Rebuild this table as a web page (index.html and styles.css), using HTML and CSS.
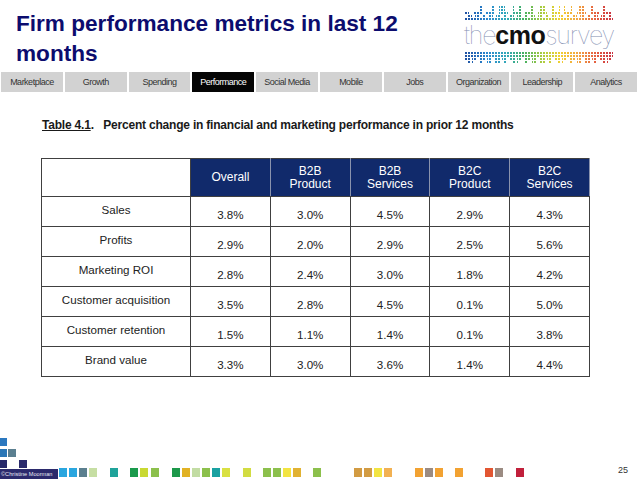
FILE: index.html
```html
<!DOCTYPE html>
<html lang="en">
<head>
<meta charset="utf-8">
<title>Firm performance metrics</title>
<link rel="stylesheet" href="styles.css">
</head>
<body>
<div class="slide">
  <header class="top">
    <h1 class="title">Firm performance metrics in last 12<br>months</h1>
    <div class="logo">
      <div class="dots dots-top"></div>
      <div class="logo-text"><span class="thin">the</span><span class="bold">cmo</span><span class="thin">survey</span></div>
      <div class="dots dots-bottom"></div>
    </div>
  </header>

  <nav class="tabs">
    <span class="tab">Marketplace</span>
    <span class="tab">Growth</span>
    <span class="tab">Spending</span>
    <span class="tab active">Performance</span>
    <span class="tab">Social Media</span>
    <span class="tab">Mobile</span>
    <span class="tab">Jobs</span>
    <span class="tab">Organization</span>
    <span class="tab">Leadership</span>
    <span class="tab">Analytics</span>
  </nav>

  <p class="caption"><span class="ul">Table 4.1</span>.&nbsp;&nbsp; Percent change in financial and marketing performance in prior 12 months</p>

  <table class="data">
    <thead>
      <tr>
        <th class="blank"></th>
        <th>Overall</th>
        <th>B2B<br>Product</th>
        <th>B2B<br>Services</th>
        <th>B2C<br>Product</th>
        <th>B2C<br>Services</th>
      </tr>
    </thead>
    <tbody>
      <tr><td class="label">Sales</td><td>3.8%</td><td>3.0%</td><td>4.5%</td><td>2.9%</td><td>4.3%</td></tr>
      <tr><td class="label">Profits</td><td>2.9%</td><td>2.0%</td><td>2.9%</td><td>2.5%</td><td>5.6%</td></tr>
      <tr><td class="label">Marketing ROI</td><td>2.8%</td><td>2.4%</td><td>3.0%</td><td>1.8%</td><td>4.2%</td></tr>
      <tr><td class="label">Customer acquisition</td><td>3.5%</td><td>2.8%</td><td>4.5%</td><td>0.1%</td><td>5.0%</td></tr>
      <tr><td class="label">Customer retention</td><td>1.5%</td><td>1.1%</td><td>1.4%</td><td>0.1%</td><td>3.8%</td></tr>
      <tr><td class="label">Brand value</td><td>3.3%</td><td>3.0%</td><td>3.6%</td><td>1.4%</td><td>4.4%</td></tr>
    </tbody>
  </table>

  <footer class="foot">
    <div class="foot-left">
      <svg class="stack" width="27" height="31" viewBox="0 0 27 31">
        <rect x="0" y="0" width="7" height="8" fill="#2b78bf"/>
        <rect x="0" y="11" width="7" height="8" fill="#2a76b6"/>
        <rect x="8" y="11" width="8" height="8" fill="#5b7f90"/>
        <rect x="0" y="22" width="7" height="8" fill="#26286a"/>
        <rect x="19" y="22" width="8" height="8" fill="#2a2a6c"/>
      </svg>
      <div class="copy">©Christine Moorman</div>
    </div>
    <svg class="strip" width="470" height="10" viewBox="0 0 470 10">
      <rect x="0" y="0" width="8" height="9" fill="#2aa6df"/>
      <rect x="10" y="0" width="8" height="9" fill="#2aa6df"/>
      <rect x="20" y="0" width="8" height="9" fill="#5b7f8f"/>
      <rect x="30" y="0" width="8" height="9" fill="#c6dea3"/>
      <rect x="51" y="0" width="8" height="9" fill="#1fa39a"/>
      <rect x="71" y="0" width="8" height="9" fill="#1a9a4c"/>
      <rect x="81" y="0" width="8" height="9" fill="#c9d932"/>
      <rect x="92" y="0" width="8" height="9" fill="#8cc04c"/>
      <rect x="113" y="0" width="8" height="9" fill="#1c984a"/>
      <rect x="123" y="0" width="8" height="9" fill="#e1b224"/>
      <rect x="133" y="0" width="8" height="9" fill="#c2dca3"/>
      <rect x="143" y="0" width="8" height="9" fill="#8cc04c"/>
      <rect x="153" y="0" width="8" height="9" fill="#1aa1a1"/>
      <rect x="163" y="0" width="8" height="9" fill="#d9e042"/>
      <rect x="184" y="0" width="8" height="9" fill="#d2dc42"/>
      <rect x="204" y="0" width="8" height="9" fill="#8cc04c"/>
      <rect x="214" y="0" width="8" height="9" fill="#8cc04c"/>
      <rect x="224" y="0" width="8" height="9" fill="#f2e442"/>
      <rect x="234" y="0" width="8" height="9" fill="#e1b232"/>
      <rect x="254" y="0" width="8" height="9" fill="#8cc04c"/>
      <rect x="295" y="0" width="8" height="9" fill="#d29b42"/>
      <rect x="305" y="0" width="8" height="9" fill="#d29b42"/>
      <rect x="315" y="0" width="8" height="9" fill="#f2e442"/>
      <rect x="325" y="0" width="8" height="9" fill="#f2b152"/>
      <rect x="356" y="0" width="8" height="9" fill="#f2a232"/>
      <rect x="366" y="0" width="8" height="9" fill="#9b8b82"/>
      <rect x="376" y="0" width="8" height="9" fill="#f2a232"/>
      <rect x="396" y="0" width="8" height="9" fill="#f2a232"/>
      <rect x="426" y="0" width="8" height="9" fill="#e25632"/>
      <rect x="436" y="0" width="8" height="9" fill="#9b8b82"/>
      <rect x="457" y="0" width="8" height="9" fill="#c1203b"/>
    </svg>
    <span class="pageno">25</span>
  </footer>
</div>
</body>
</html>
```

FILE: styles.css
```css
* { box-sizing: border-box; }

html, body {
  margin: 0;
  padding: 0;
  background: #fff;
}

body {
  font-family: "Liberation Sans", Arial, sans-serif;
  color: #222;
}

.slide {
  width: 638px;
  height: 479px;
  display: flex;
  flex-direction: column;
  overflow: hidden;
}

/* ---------- header ---------- */
.top {
  height: 72px;
  display: flex;
  justify-content: space-between;
  align-items: flex-start;
}

.title {
  margin: 0;
  padding: 9px 0 0 16px;
  font-size: 22.6px;
  line-height: 30px;
  font-weight: bold;
  color: #0c0c6e;
}

.logo {
  width: 152px;
  margin: 5px 22px 0 0;
  display: flex;
  flex-direction: column;
  align-items: flex-start;
}

.dots {
  width: 148px;
  margin-left: 1px;
}

.dots-top {
  height: 15px;
  background:
    repeating-linear-gradient(90deg, transparent 0 2px, #fff 2px 3px),
    repeating-linear-gradient(0deg, transparent 0 2px, #fff 2px 3px),
    repeating-linear-gradient(90deg, #fff 0 6px, transparent 6px 9px, #fff 9px 14px, transparent 14px 20px) 0 0 / 100% 6px no-repeat,
    repeating-linear-gradient(90deg, transparent 0 4px, #fff 4px 8px, transparent 8px 13px) 0 0 / 100% 9px no-repeat,
    repeating-linear-gradient(90deg, #fff 0 3px, transparent 3px 7px) 0 9px / 100% 3px no-repeat,
    linear-gradient(90deg, #1f4fa0, #2a88d0 15%, #32a8b8 28%, #44b060 40%, #a9cc40 52%, #f0d030 64%, #f3a640 76%, #e56040 88%, #c83040);
}

.dots-bottom {
  height: 12px;
  margin-top: 3px;
  background:
    repeating-linear-gradient(90deg, transparent 0 2px, #fff 2px 3px),
    repeating-linear-gradient(0deg, transparent 0 2px, #fff 2px 3px),
    repeating-linear-gradient(90deg, transparent 0 5px, #fff 5px 7px, transparent 7px 12px, #fff 12px 15px) 0 6px / 100% 6px no-repeat,
    repeating-linear-gradient(90deg, #fff 0 2px, transparent 2px 9px) 0 9px / 100% 3px no-repeat,
    linear-gradient(90deg, #1f4fa0, #2a88d0 15%, #32a8b8 28%, #44b060 40%, #a9cc40 52%, #f0d030 64%, #f3a640 76%, #e56040 88%, #c83040);
}

.logo-text {
  font-family: Inter, Roboto, "Liberation Sans", sans-serif;
  font-size: 25px;
  line-height: 26px;
  letter-spacing: -1.2px;
  white-space: nowrap;
  margin-top: 2px;
}

.logo-text .thin {
  font-weight: 100;
  color: #7f8db0;
}

.logo-text .bold {
  font-family: "Liberation Sans", Arial, sans-serif;
  font-weight: bold;
  color: #111;
  letter-spacing: -0.5px;
}

/* ---------- tabs ---------- */
.tabs {
  display: grid;
  grid-template-columns: repeat(10, 1fr);
  gap: 2px;
  height: 20px;
  padding: 0 1px;
}

.tab {
  background: #d2d2d2;
  color: #333;
  font-size: 9px;
  letter-spacing: -0.5px;
  display: flex;
  align-items: center;
  justify-content: center;
  white-space: nowrap;
}

.tab.active {
  background: #050505;
  color: #fff;
}

/* ---------- caption ---------- */
.caption {
  margin: 26px 0 0 42px;
  font-weight: bold;
  font-size: 12px;
  line-height: 14px;
  letter-spacing: -0.2px;
  color: #1a1a1a;
  white-space: nowrap;
}

.caption .ul {
  text-decoration: underline;
}

/* ---------- table ---------- */
.data {
  margin: 26px 0 0 41px;
  border-collapse: collapse;
  table-layout: fixed;
  width: 549px;
}

.data th,
.data td {
  border: 1px solid #404040;
  text-align: center;
  padding: 0;
}

.data th {
  height: 38px;
  background: #112a6b;
  color: #fff;
  font-weight: normal;
  font-size: 12px;
  line-height: 13px;
  border-color: #404040 #8a93ad;
}

.data th.blank {
  width: 149px;
  background: #fff;
  border-color: #404040;
}

.data td {
  height: 30px;
  font-size: 11.6px;
  color: #222;
  padding-top: 5px;
}

.data td.label {
  padding: 0 0 5px 0;
}

/* ---------- footer ---------- */
.foot {
  margin-top: auto;
  display: flex;
  align-items: flex-end;
}

.foot-left {
  width: 59px;
  display: flex;
  flex-direction: column;
}

.stack {
  display: block;
}

.copy {
  width: 58px;
  height: 10px;
  background: #2b2a6c;
  color: #e8e8f2;
  font-size: 5.6px;
  line-height: 10px;
  padding-left: 1px;
  white-space: nowrap;
  overflow: hidden;
}

.strip {
  display: block;
  margin-bottom: 1px;
}

.pageno {
  margin-left: auto;
  margin-right: 10px;
  margin-bottom: 4px;
  font-size: 9px;
  line-height: 10px;
  color: #333;
}
```
